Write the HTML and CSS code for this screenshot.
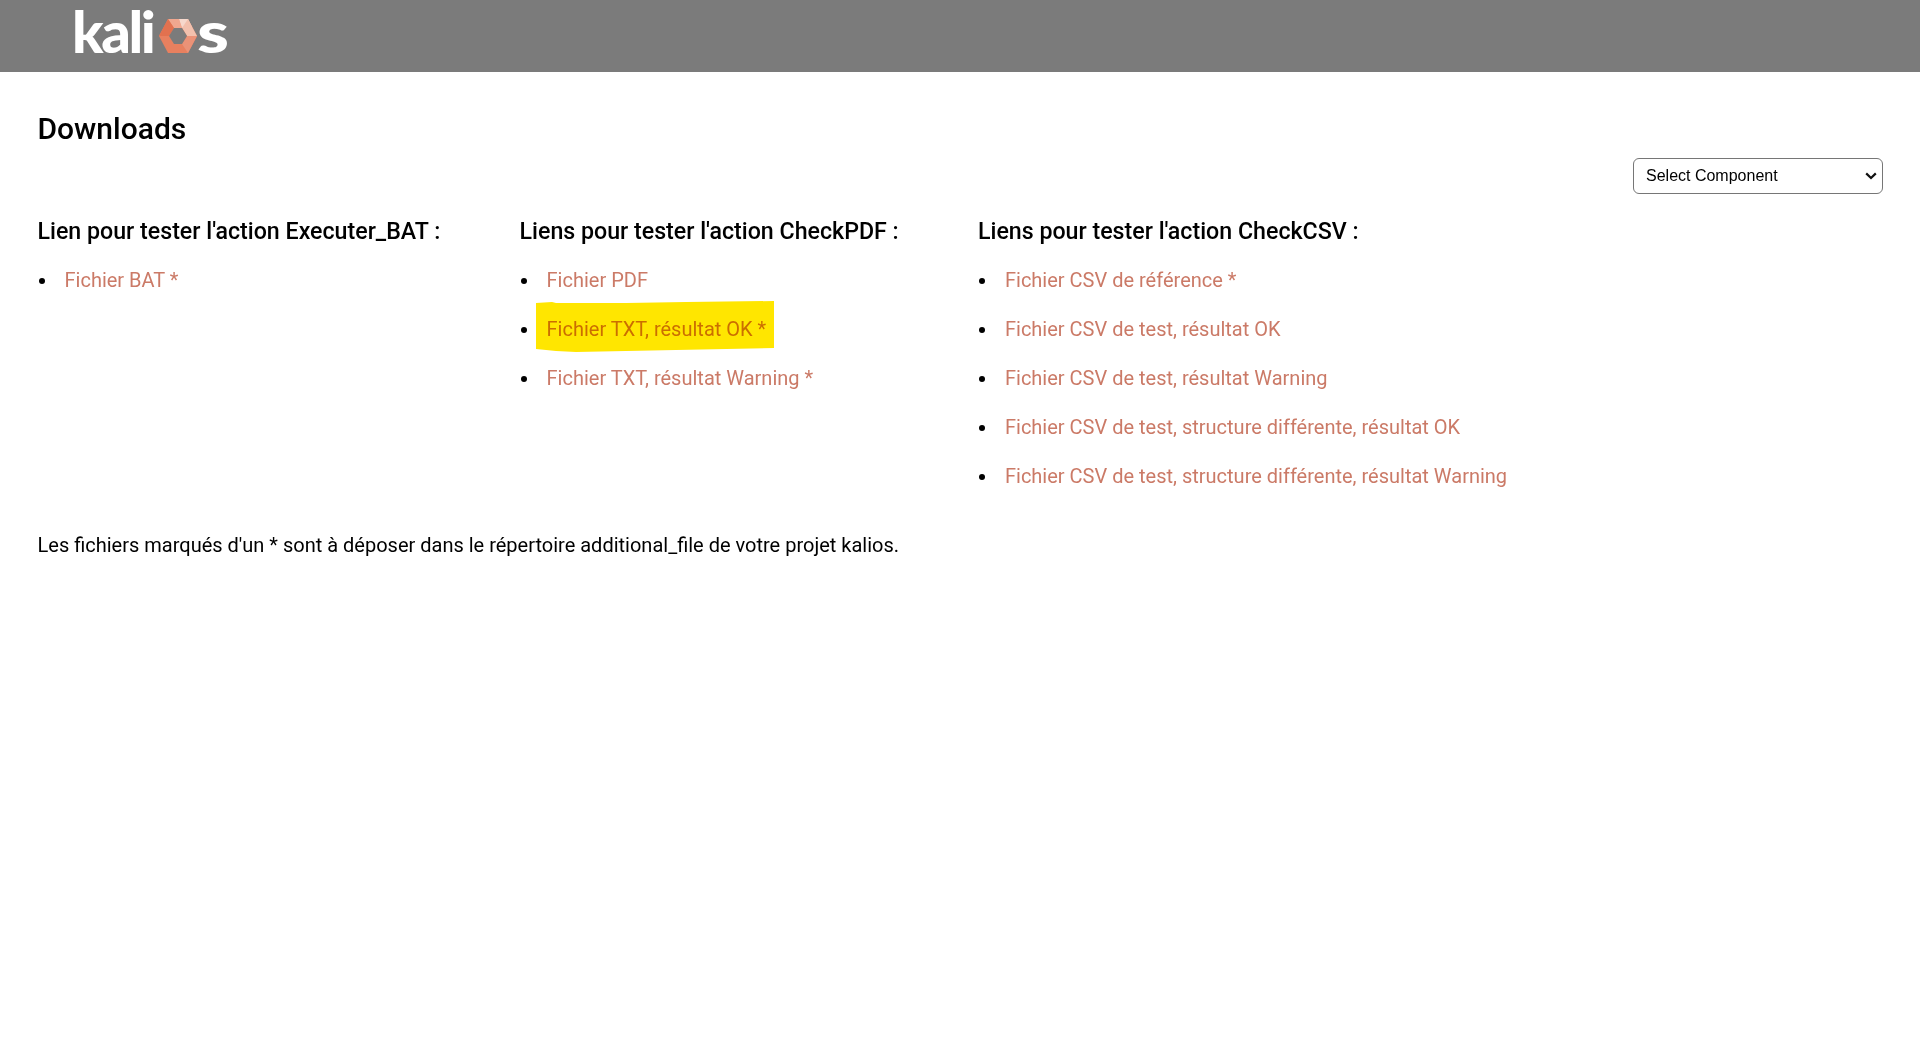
FILE: index.html
```html
<!DOCTYPE html>
<html lang="fr">
<head>
<meta charset="utf-8">
<title>Downloads</title>
<link rel="stylesheet" href="styles.css">
</head>
<body>
<header class="topbar">
  <a class="logo" href="#"><span>kali</span><svg class="logo-hex" viewBox="0 0 38 34" width="38" height="34" aria-hidden="true">
    <polygon points="9,0 29,0 38,17 29,34 9,34 0,17" fill="#e8805f"/>
    <polygon points="9,0 20,0 23,9 15,9" fill="#f0a78f"/>
    <polygon points="20,0 29,0 33,8 23,9" fill="#f6d8cc"/>
    <polygon points="29,0 38,17 28,17 23,9" fill="#f2c0ad"/>
    <polygon points="9,0 15,9 10,17 0,17" fill="#e2714f"/>
    <polygon points="28,17 38,17 29,34 23,25" fill="#eb9277"/>
    <polygon points="15,9 23,9 28,17 23,25 15,25 10,17" fill="#7b7b7b"/>
  </svg><span class="logo-s">s</span></a>
</header>
<main class="content">
  <h1 class="title">Downloads</h1>
  <div class="select-row">
    <select class="component-select"><option>Select Component</option></select>
  </div>
  <div class="columns">
    <section class="col">
      <h2>Lien pour tester l'action Executer_BAT :</h2>
      <ul>
        <li><a href="#">Fichier BAT *</a></li>
      </ul>
    </section>
    <section class="col">
      <h2>Liens pour tester l'action CheckPDF :</h2>
      <ul>
        <li><a href="#">Fichier PDF</a></li>
        <li class="marked"><a href="#">Fichier TXT, résultat OK *</a><svg class="marker" viewBox="0 0 238 51" preserveAspectRatio="none" aria-hidden="true"><path d="M0 2 L16 1 L20 2 L90 2 L150 1 L238 0 L238 47 L140 49 L90 50 L40 51 L20 50 L0 48 Z" fill="#ffe600"/></svg></li>
        <li><a href="#">Fichier TXT, résultat Warning *</a></li>
      </ul>
    </section>
    <section class="col">
      <h2>Liens pour tester l'action CheckCSV :</h2>
      <ul>
        <li><a href="#">Fichier CSV de référence *</a></li>
        <li><a href="#">Fichier CSV de test, résultat OK</a></li>
        <li><a href="#">Fichier CSV de test, résultat Warning</a></li>
        <li><a href="#">Fichier CSV de test, structure différente, résultat OK</a></li>
        <li><a href="#">Fichier CSV de test, structure différente, résultat Warning</a></li>
      </ul>
    </section>
  </div>
  <p class="note">Les fichiers marqués d'un * sont à déposer dans le répertoire additional_file de votre projet kalios.</p>
</main>
</body>
</html>
```
FILE: styles.css
```css
* { box-sizing: border-box; }
html, body { margin: 0; padding: 0; background: #fff; }
body { font-family: Roboto, "Liberation Sans", sans-serif; color: #000; }
.topbar { height: 72px; background: #7b7b7b; padding-left: 72px; }
.logo { display: inline-flex; align-items: flex-start; height: 70px; color: #fff; text-decoration: none; font-family: Lato, sans-serif; font-weight: 900; font-size: 58px; letter-spacing: -2.4px; line-height: 62px; }
.logo-hex { margin: 19px 0 0 5px; }
.logo-s { display: inline-block; transform: scaleX(1.25); transform-origin: left center; }
.content { padding: 0 37px 0 37.5px; }
.title { margin: 0; padding-top: 39px; font-size: 30px; line-height: 35px; font-weight: 500; }
.select-row { display: flex; justify-content: flex-end; margin-top: 12px; }
.component-select { appearance: none; width: 250px; height: 36px; padding: 0 24px 2px 12px; font-family: "Liberation Sans", sans-serif; font-size: 16px; color: #000; background: #fff url("data:image/svg+xml,%3Csvg xmlns='http://www.w3.org/2000/svg' width='12' height='8' viewBox='0 0 12 8'%3E%3Cpath d='M1.2 1.4 L6 6 L10.8 1.4' fill='none' stroke='%23111' stroke-width='2.2'/%3E%3C/svg%3E") no-repeat right 5px center; border: 1px solid #767676; border-radius: 6px; }
.columns { display: flex; gap: 79.25px; margin-top: 22px; }
.col h2 { margin: 0; font-size: 23.2px; line-height: 30px; font-weight: 500; }
.col ul { margin: 10px 0 0; padding-left: 20px; }
.col li { position: relative; height: 49px; padding-left: 7px; line-height: 49px; font-size: 20px; }
.col li a { color: #cb7a67; text-decoration: none; }
.marker { position: absolute; left: -4px; top: -4px; width: 238px; height: 51px; mix-blend-mode: multiply; pointer-events: none; }
.note { margin: 29px 0 0; font-size: 20px; line-height: 30px; }
```
